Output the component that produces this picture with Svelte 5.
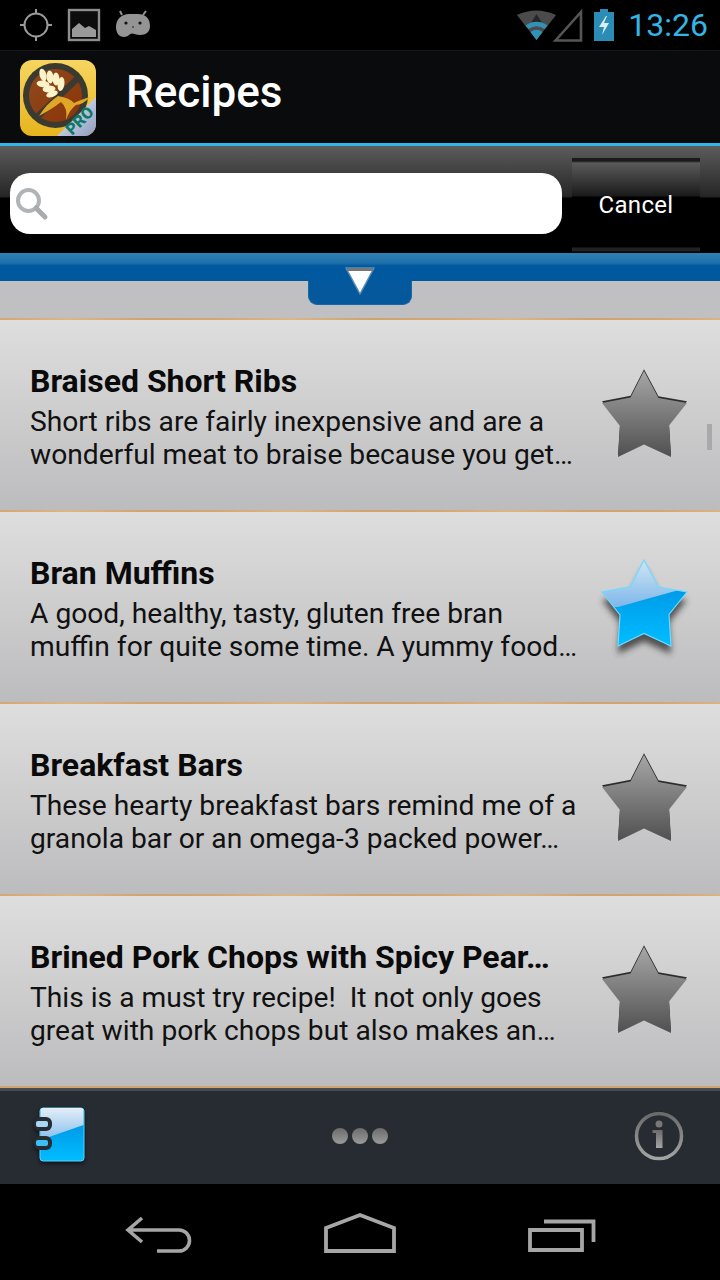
<script>
  const recipes = [
    { title: 'Braised Short Ribs', lines: ['Short ribs are fairly inexpensive and are a', 'wonderful meat to braise because you get…'], fav: false },
    { title: 'Bran Muffins', lines: ['A good, healthy, tasty, gluten free bran', 'muffin for quite some time. A yummy food…'], fav: true },
    { title: 'Breakfast Bars', lines: ['These hearty breakfast bars remind me of a', 'granola bar or an omega-3 packed power…'], fav: false },
    { title: 'Brined Pork Chops with Spicy Pear…', lines: ['This is a must try recipe!\u00a0 It not only goes', 'great with pork chops but also makes an…'], fav: false }
  ];
  const starPts = '44,2 58.5,29 87,34 69,56.5 71,88 44,75.5 18,88 20,57 2,34 30.5,28.5';
</script>

<div class="screen">
  <header class="status">
    <div class="status-left">
      <svg width="36" height="36" viewBox="0 0 36 36" class="ic-gps"><g fill="none" stroke="#9a9a9a" stroke-width="2"><circle cx="18" cy="18" r="11.5"/><path d="M18 2v5M18 29v5M2 18h5M29 18h5"/></g></svg>
      <svg width="34" height="34" viewBox="0 0 34 34" class="ic-pic"><rect x="2" y="2" width="30" height="30" fill="#0c0c0c" stroke="#8e8e8e" stroke-width="2.4"/><path d="M5 29V21l7-6 6 5 4-2 7 4v7z" fill="#9a9a9a"/></svg>
      <svg width="36" height="30" viewBox="0 0 36 30" class="ic-bot"><path d="M7 5 5 1M28 5l3-4" stroke="#949494" stroke-width="2" fill="none"/><path d="M1 17C1 9 7 4 14 4h9c7 0 12 4 12 12 0 6-4 9-10 9-4 0-6-1.500-8-1.500S13 27 9 27C4 27 1 23 1 17z" fill="#949494"/><circle cx="11" cy="13" r="1.600" fill="#111"/><circle cx="25" cy="13" r="1.600" fill="#111"/><circle cx="18" cy="17" r="1" fill="#444"/></svg>
    </div>
    <div class="status-right">
      <svg width="42" height="32" viewBox="0 0 42 32" class="ic-wifi"><path d="M1 6Q20-3 40 6L20.500 31z" fill="#4b4b4b"/><path d="M20.500 5l5 8h-10z" fill="#262626"/><path d="M9.500 16.500Q20.500 9 31.500 16.500L28.500 20Q20.500 14.500 12.500 20z" fill="#2f93b8"/><path d="M14.500 23Q20.500 18.500 26.500 23L20.500 31z" fill="#2f93b8"/></svg>
      <svg width="30" height="33" viewBox="0 0 30 33" class="ic-sig"><path d="M2.500 31.500 28 3v28.500z" fill="none" stroke="#555" stroke-width="2.600"/></svg>
      <svg width="20" height="32" viewBox="0 0 20 32" class="ic-bat"><path d="M6 0h8v3h6v29H0V3h6z" fill="#2b8db5"/><path d="M12 7 5 18h5l-2 8 7-12h-5l3-7z" fill="#d8eef5"/></svg>
      <span class="clock">13:26</span>
    </div>
  </header>

  <div class="actionbar">
    <svg width="76" height="76" viewBox="0 0 76 76" class="appicon">
      <defs>
        <linearGradient id="iconBg" x1="0" y1="0" x2="0" y2="1"><stop offset="0" stop-color="#f6d660"/><stop offset="1" stop-color="#e6b41e"/></linearGradient>
        <linearGradient id="brown" x1="0" y1="0" x2="1" y2="1"><stop offset="0" stop-color="#8f4a1c"/><stop offset="1" stop-color="#8a3408"/></linearGradient>
        <linearGradient id="ribbon" x1="0" y1="0" x2="1" y2="1"><stop offset="0" stop-color="#f2f3f5"/><stop offset="1" stop-color="#8d9bc0"/></linearGradient>
        <clipPath id="iconClip"><rect width="76" height="76" rx="12"/></clipPath>
        <linearGradient id="starGray" x1="0" y1="0" x2="0" y2="1"><stop offset="0" stop-color="#a6a6a6"/><stop offset="1" stop-color="#505050"/></linearGradient>
        <linearGradient id="starLight" x1="0" y1="0" x2="0" y2="1"><stop offset="0" stop-color="#d6e6f5"/><stop offset="1" stop-color="#7db8ea"/></linearGradient>
        <linearGradient id="starBlue" x1="0" y1="0" x2="0" y2="1"><stop offset="0" stop-color="#0087dd"/><stop offset="1" stop-color="#00beff"/></linearGradient>
        <linearGradient id="glyphGray" x1="0" y1="0" x2="0" y2="1"><stop offset="0" stop-color="#6a6a6a"/><stop offset="1" stop-color="#a4a4a4"/></linearGradient>
        <clipPath id="starClip"><polygon points={starPts}/></clipPath>
        <filter id="soft" x="-30%" y="-30%" width="160%" height="160%"><feGaussianBlur stdDeviation="3"/></filter>
      </defs>
      <g clip-path="url(#iconClip)">
        <rect width="76" height="76" fill="url(#iconBg)"/>
        <circle cx="35.500" cy="35.500" r="32.500" fill="#3b3a30"/>
        <circle cx="35.500" cy="35.500" r="26.500" fill="url(#brown)"/>
        <path d="M59 17 15 59" stroke="#3b3a30" stroke-width="6.500"/>
        <path d="M38 36Q26 44 19 56 32 49 41 42 48 48 46 60 50 49 56 45 64 44 70 37 60 40 54 43 50 38 38 36z" fill="#e0a628"/>
        <g fill="#fdf3c8">
          <ellipse cx="23" cy="15" rx="3.400" ry="6.500" transform="rotate(-15 23 15)"/>
          <ellipse cx="30" cy="17" rx="3.400" ry="6.500" transform="rotate(-5 30 17)"/>
          <ellipse cx="36" cy="19" rx="3.400" ry="6.500"/>
          <ellipse cx="41" cy="24" rx="3.400" ry="7" transform="rotate(8 41 24)"/>
          <ellipse cx="23" cy="24" rx="6.500" ry="3.400" transform="rotate(8 23 24)"/>
          <ellipse cx="29" cy="29" rx="6.500" ry="3.400" transform="rotate(-5 29 29)"/>
          <ellipse cx="32" cy="34" rx="6" ry="3" transform="rotate(-20 32 34)"/>
        </g>
        <polygon points="76,37 76,76 37,76" fill="url(#ribbon)"/>
      </g>
      <text transform="translate(63.500 64.500) rotate(-45)" class="pro">PRO</text>
    </svg>
    <h1>Recipes</h1>
  </div>

  <div class="searchbar">
    <div class="field">
      <svg width="36" height="36" viewBox="0 0 36 36"><circle cx="14.500" cy="14.500" r="10.500" fill="none" stroke="#b0b4b6" stroke-width="4"/><path d="M22 22 31 31" stroke="#a8acae" stroke-width="5" stroke-linecap="round"/></svg>
    </div>
    <button class="cancel">Cancel</button>
  </div>

  <div class="blue"></div>

  <div class="gap">
    <div class="handle"></div>
    <svg width="34" height="30" viewBox="0 0 34 30" class="tri"><path d="M3 2h28L17 28z" fill="#fff" stroke="#5a8fb4" stroke-width="1.500" stroke-linejoin="round"/><path d="M4 3.500h26" stroke="#777" stroke-width="3"/></svg>
  </div>

  <main>
    {#each recipes as r}
      <article class="row">
        <div class="text">
          <h2>{r.title}</h2>
          {#each r.lines as line}<p>{line}</p>{/each}
        </div>
        {#if r.fav}
          <svg width="100" height="110" viewBox="-5 -5 100 110" class="star fav">
            <polygon points={starPts} fill="#333" opacity=".8" filter="url(#soft)" transform="translate(0 8)"/>
            <polygon points={starPts} fill="url(#starBlue)"/>
            <g clip-path="url(#starClip)"><polygon points="0,0 90,0 90,29 18,49 0,49" fill="url(#starLight)"/></g>
            <polygon points={starPts} fill="none" stroke="#6fdcff" stroke-width="1.200"/>
          </svg>
        {:else}
          <svg width="100" height="110" viewBox="-5 -5 100 110" class="star">
            <polygon points={starPts} fill="#2e2e2e" transform="translate(0 -1.800)"/>
            <polygon points={starPts} fill="url(#starGray)"/>
          </svg>
        {/if}
      </article>
    {/each}
  </main>

  <div class="scroll"></div>

  <div class="toolbar">
    <svg width="56" height="62" viewBox="0 0 56 62" class="book">
      <defs>
        <linearGradient id="bookLight" x1="0" y1="0" x2="0" y2="1"><stop offset="0" stop-color="#e4eef8"/><stop offset="1" stop-color="#84bfee"/></linearGradient>
      </defs>
      <rect x="6" y="2" width="44" height="53" rx="3" fill="url(#starBlue)" stroke="#59d2ff" stroke-width="1"/>
      <path d="M6.500 5a3 3 0 0 1 3-3h37a3 3 0 0 1 3 3v14L6.500 34z" fill="url(#bookLight)"/>
      <g fill="#272c33"><rect x="0" y="11" width="18" height="14" rx="6"/><rect x="0" y="30" width="18" height="14" rx="6"/></g>
      <rect x="2" y="15" width="12" height="6" rx="2" fill="#a9d8f5"/>
      <rect x="2" y="34" width="12" height="6" rx="2" fill="#3bc0f5"/>
    </svg>
    <div class="dots"><i></i><i></i><i></i></div>
    <svg width="52" height="52" viewBox="0 0 52 52" class="info">
      <circle cx="26" cy="26" r="22.500" fill="none" stroke="#111" stroke-width="2" transform="translate(0 -1)"/>
      <circle cx="26" cy="26" r="22.500" fill="none" stroke="url(#glyphGray)" stroke-width="3.500"/>
      <circle cx="26" cy="14" r="3.500" fill="#777"/>
      <path d="M19.500 20h10v18h-6.500V23h-3.500z" fill="url(#glyphGray)"/>
    </svg>
  </div>

  <nav>
    <svg width="80" height="48" viewBox="0 0 80 48"><path d="M22 8 8 20l14 12M9 20h50a10.500 10.500 0 0 1 0 21H37" fill="none" stroke="#a6a6a6" stroke-width="3.600"/></svg>
    <svg width="80" height="48" viewBox="0 0 80 48"><path d="M6 18 40 5l34 13v23H6z" fill="none" stroke="#a6a6a6" stroke-width="3.800"/></svg>
    <svg width="80" height="48" viewBox="0 0 80 48"><path d="M10 20h52v20H10z" fill="none" stroke="#a6a6a6" stroke-width="3.800"/><path d="M24 11.500h49.500V32" fill="none" stroke="#a6a6a6" stroke-width="3.800"/></svg>
  </nav>
</div>

<style>
  :global(body) { margin: 0; background: #000; }
  .screen { position: relative; width: 720px; height: 1280px; overflow: hidden; font-family: Roboto, "Liberation Sans", sans-serif; background: #000; display: flex; flex-direction: column; }

  .status { height: 50px; flex: none; display: flex; justify-content: space-between; align-items: center; background: #000; border-bottom: 1px solid #161616; }
  .status-left, .status-right { display: flex; align-items: center; }
  .ic-gps { margin-left: 18px; }
  .ic-pic { margin-left: 13px; }
  .ic-bot { margin-left: 14px; }
  .ic-sig { margin-left: -5px; }
  .ic-bat { margin-left: 11px; }
  .clock { color: #33b5e5; font-size: 32px; margin: 0 12px 0 14px; line-height: 50px; }

  .actionbar { height: 92px; flex: none; display: flex; align-items: center; background: #090b0c; }
  .appicon { margin: 2px 0 0 20px; overflow: visible; }
  .pro { font: 900 16px Roboto, sans-serif; fill: #0c7a66; text-anchor: middle; }
  h1 { margin: 0 0 0 30px; color: #fff; font-size: 44px; font-weight: 500; line-height: 1; position: relative; top: -5px; }

  .searchbar { height: 110px; flex: none; box-sizing: border-box; border-top: 3px solid #33b5e5; display: flex; align-items: center; padding-left: 10px; background: linear-gradient(#5c5c5c 0, #262626 47%, #000 49%, #000 100%); }
  .field { width: 552px; height: 61px; background: #fff; border-radius: 20px; display: flex; align-items: center; padding-left: 4px; box-sizing: border-box; margin-top: 8px; }
  .cancel { width: 128px; height: 94px; margin: 11px 0 0 10px; border: 0; padding: 0; color: #fff; font: 400 24px Roboto, sans-serif; letter-spacing: .3px; background: linear-gradient(#1a1a1a 0 3px, #5a5a5a 5px, #1a1a1a 38px, #000 39px, #000 89px, #222 90px, #222 93px, #000 94px); }

  .blue { height: 28px; flex: none; background: linear-gradient(#2f80b2 0, #1f70aa 10px, #00589f 13px, #00589f 100%); }

  .gap { position: relative; height: 37px; flex: none; background: #c0c0c2; }
  .handle { position: absolute; left: 308px; top: 0; width: 104px; height: 24px; box-sizing: border-box; background: #05589b; border: 1px solid #1667a8; border-top: 0; border-radius: 0 0 9px 9px; }
  .tri { position: absolute; left: 343px; top: -15px; }

  main { flex: none; }
  .row { height: 192px; box-sizing: border-box; padding: 0 0 0 30px; display: flex; align-items: center; background: linear-gradient(#dedede, #bcbcbe); border-top: 2px solid #d3a870; border-image: repeating-linear-gradient(90deg, #d3a870 0, #dcb688 70px, #cfa36a 150px, #d3a870 220px) 1; }
  .text { flex: 1; min-width: 0; margin-top: 2px; white-space: nowrap; overflow: hidden; }
  h2 { margin: 0 0 5px; font-size: 32px; font-weight: 700; line-height: 38px; color: #0a0a0a; }
  p { margin: 0; font-size: 28.2px; line-height: 33px; color: #111; }
  .star { flex: none; margin: 8px 25px 0 0; }
  .star.fav { margin-top: 2px; }

  .scroll { position: absolute; left: 707px; top: 424px; width: 5px; height: 26px; background: #a9a9ab; }

  .toolbar { height: 98px; flex: none; box-sizing: border-box; background: #272c33; border-top: 2px solid #d0a46c; display: flex; align-items: center; justify-content: space-between; box-shadow: inset 0 3px 0 #454b52; padding: 0 35px 0 34px; }
  .book { filter: drop-shadow(0 2px 2px rgba(0,0,0,.6)); position: relative; top: 1px; }
  .dots { display: flex; gap: 4px; margin-right: 3px; }
  .dots i { width: 16px; height: 16px; border-radius: 50%; background: linear-gradient(#6c6c6c, #9a9a9a); display: block; }

  nav { flex: 1; display: flex; justify-content: center; gap: 120px; padding-top: 26px; background: #000; align-items: flex-start; }
</style>
